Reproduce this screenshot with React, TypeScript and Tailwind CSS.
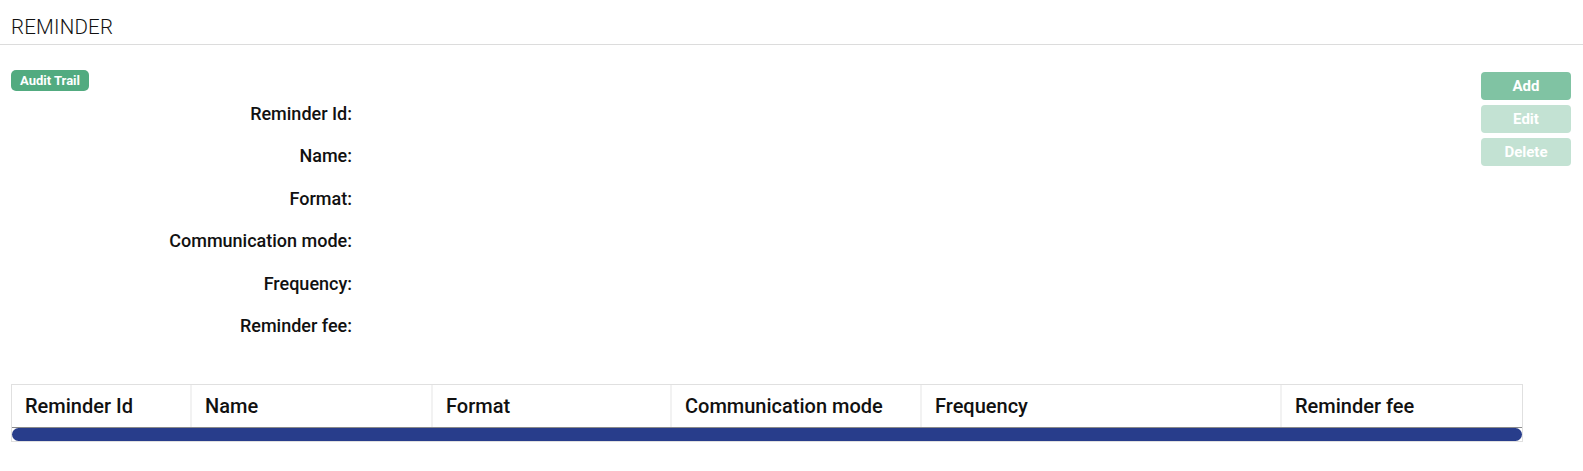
import React from "react";

const labels = [
  "Reminder Id:",
  "Name:",
  "Format:",
  "Communication mode:",
  "Frequency:",
  "Reminder fee:",
];

const cols = [
  { name: "Reminder Id", w: "w-[180px]" },
  { name: "Name", w: "w-[241px]" },
  { name: "Format", w: "w-[239px]" },
  { name: "Communication mode", w: "w-[250px]" },
  { name: "Frequency", w: "w-[360px]" },
  { name: "Reminder fee", w: "flex-1" },
];

export default function App() {
  return (
    <div className="w-[1583px] h-[471px] bg-white font-['Roboto',sans-serif] text-[#111]">
      <div className="h-[45px] border-b border-[#dcdcdc] pl-[11px] pt-[15px]">
        <div className="text-[20.5px] leading-[24px] font-light text-[#111] tracking-[0.2px]">REMINDER</div>
      </div>
      <div className="flex pl-[11px] pr-[12px] pt-[23px]">
        <div className="flex-1">
          <div className="inline-flex h-[21px] items-center rounded-[5px] bg-[#52ab80] px-[9px] text-[13px] font-bold text-white">
            Audit Trail
          </div>
          <div className="w-[341px]">
            {labels.map((l) => (
              <div key={l} className="flex h-[42.5px] items-center justify-end text-[18px] font-medium">
                {l}
              </div>
            ))}
          </div>
        </div>
        <div className="flex w-[90px] flex-col gap-[5px] pt-[4px]">
          <div className="flex h-[28px] items-center justify-center rounded-[4px] bg-[#80c3a3] text-[15px] font-bold text-white">Add</div>
          <div className="flex h-[28px] items-center justify-center rounded-[4px] bg-[#c3e2d3] text-[15px] font-bold text-white">Edit</div>
          <div className="flex h-[28px] items-center justify-center rounded-[4px] bg-[#c3e2d3] text-[15px] font-bold text-white">Delete</div>
        </div>
      </div>
      <div className="ml-[11px] mt-[37px] w-[1512px] border border-[#e0e0e0]">
        <div className="flex h-[43px] border-b border-[#8a8a8a]">
          {cols.map((c, i) => (
            <div
              key={c.name}
              className={`${c.w} flex items-center pl-[13px] text-[20px] font-medium ${i < cols.length - 1 ? "border-r-2 border-[#f2f2f2]" : ""}`}
            >
              {c.name}
            </div>
          ))}
        </div>
        <div className="h-[13px] rounded-full bg-[#283d8b]" />
      </div>
    </div>
  );
}
